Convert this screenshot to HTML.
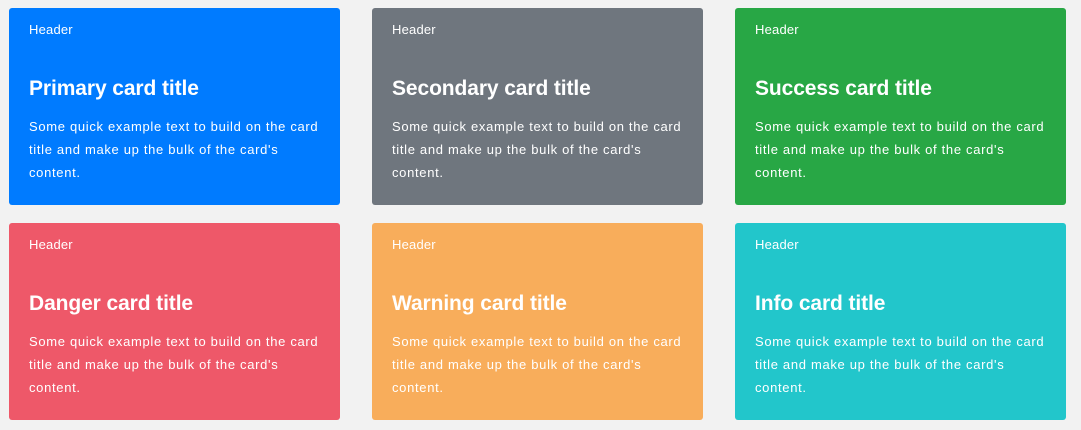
<!DOCTYPE html>
<html><head><style>
body{margin:0;background:#f2f2f2;width:1081px;height:430px;position:relative;font-family:"Liberation Sans",sans-serif;color:#fff;overflow:hidden}
.c{position:absolute;width:331px;height:197px;border-radius:3px}
.h{position:absolute;left:20px;top:14px;font-size:13px;letter-spacing:0.2px}
.t{position:absolute;left:20px;top:69px;font-size:21px;font-weight:bold;letter-spacing:-0.1px}
.p{position:absolute;left:20px;top:107px;width:310px;font-size:13px;line-height:23px;letter-spacing:0.68px;white-space:nowrap}
</style></head><body>
<div class="c" style="left:9px;top:8px;background:#007bff"><div class="h">Header</div><div class="t">Primary card title</div><div class="p">Some quick example text to build on the card<br>title and make up the bulk of the card's<br>content.</div></div>
<div class="c" style="left:372px;top:8px;background:#6f767e"><div class="h">Header</div><div class="t">Secondary card title</div><div class="p">Some quick example text to build on the card<br>title and make up the bulk of the card's<br>content.</div></div>
<div class="c" style="left:735px;top:8px;background:#28a745"><div class="h">Header</div><div class="t">Success card title</div><div class="p">Some quick example text to build on the card<br>title and make up the bulk of the card's<br>content.</div></div>
<div class="c" style="left:9px;top:223px;background:#ee5869"><div class="h">Header</div><div class="t">Danger card title</div><div class="p">Some quick example text to build on the card<br>title and make up the bulk of the card's<br>content.</div></div>
<div class="c" style="left:372px;top:223px;background:#f8ad5b"><div class="h">Header</div><div class="t">Warning card title</div><div class="p">Some quick example text to build on the card<br>title and make up the bulk of the card's<br>content.</div></div>
<div class="c" style="left:735px;top:223px;background:#22c6cb"><div class="h">Header</div><div class="t">Info card title</div><div class="p">Some quick example text to build on the card<br>title and make up the bulk of the card's<br>content.</div></div>
</body></html>
